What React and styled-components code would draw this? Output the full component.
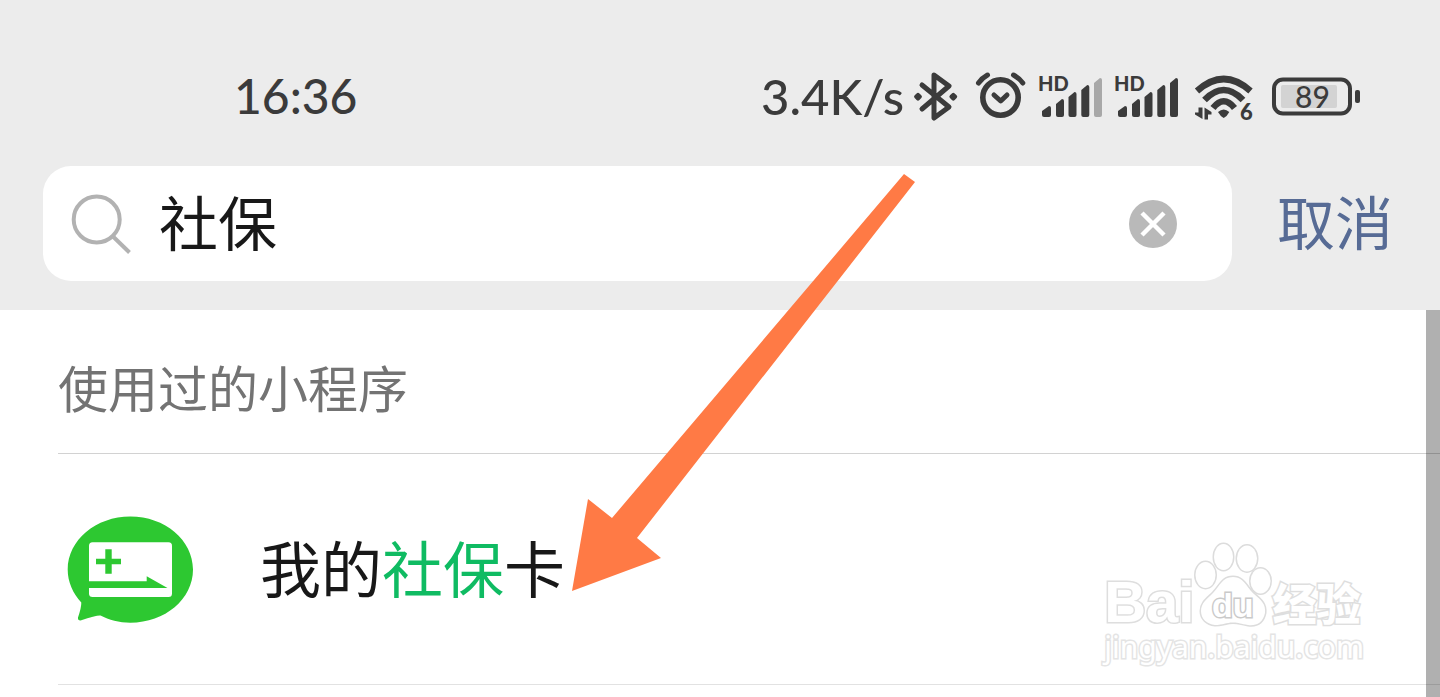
import React, { useState } from 'react';
import styled, { createGlobalStyle } from 'styled-components';

const GlobalStyle = createGlobalStyle`
  * { box-sizing: border-box; }
  body {
    margin: 0;
    background: #fff;
    font-family: "Noto Sans CJK SC", sans-serif;
    color: #181818;
  }
  button, input {
    border: 0;
    padding: 0;
    background: none;
    font-family: inherit;
  }
  button { cursor: pointer; }
`

const Page = styled.div`
  position: relative;
  display: flex;
  flex-direction: column;
  min-height: 100vh;
  overflow: hidden;
`

const Header = styled.header`
  padding-bottom: 29px;
  background: #ececec;
`

const StatusBar = styled.div`
  display: flex;
  align-items: center;
  justify-content: space-between;
  height: 166px;
  padding: 28px 80px 0 234px;
  color: #3b3b3b;
`

const StatusText = styled.span`
  padding-bottom: 2px;
  font-family: Lato, sans-serif;
  font-size: ${props => props.$size}px;
  font-weight: 500;
  line-height: 60px;
`

const StatusGroup = styled.div`
  display: flex;
  align-items: center;
  gap: ${props => props.$gap}px;
`

const Glyph = styled.svg`
  display: block;
  flex: none;
  overflow: visible;
`

const SmallLabel = styled.text`
  font-family: Lato, sans-serif;
  font-size: ${props => props.$size}px;
  font-weight: ${props => props.$weight};
  fill: #3b3b3b;
`

const SearchRow = styled.form`
  display: flex;
  align-items: center;
  padding: 0 47px 0 43px;
  gap: 45px;
`

const SearchBox = styled.label`
  display: flex;
  flex: 1;
  align-items: center;
  min-width: 0;
  height: 115px;
  padding: 0 55px 0 28px;
  border-radius: 28px;
  background: #fff;
`

const SearchInput = styled.input`
  flex: 1;
  min-width: 0;
  height: 96px;
  margin-left: 28px;
  padding-bottom: 6px;
  color: #181818;
  font-size: 59px;
  outline: none;
`

const IconButton = styled.button`
  flex: none;
  height: 48px;
`

const CancelButton = styled.button`
  flex: none;
  padding-bottom: 8px;
  color: #576b95;
  font-size: 58px;
  line-height: 90px;
`

const Results = styled.main`
  position: relative;
  flex: 1;
  background: #fff;
`

const SectionTitle = styled.h2`
  margin: 0 0 0 58px;
  padding: 39px 0 30px;
  border-bottom: 1px solid #d2d2d2;
  color: #737373;
  font-size: 50px;
  font-weight: 400;
  line-height: 74px;
`

const ResultRow = styled.a`
  display: flex;
  align-items: center;
  gap: 66px;
  height: 231px;
  margin-left: 58px;
  padding: 2px 0 0 9px;
  border-bottom: 1px solid #e2e2e2;
  color: #181818;
  font-size: 61px;
  line-height: 90px;
  text-decoration: none;
`

const ResultName = styled.span`
  padding-bottom: 6px;
`

const Match = styled.span`
  color: #0fbb62;
`

const ScrollThumb = styled.div`
  position: absolute;
  top: 0;
  right: 0;
  bottom: 0;
  width: 14px;
  background: rgba(0, 0, 0, 0.31);
`

const Pointer = styled.svg`
  position: absolute;
  top: 174px;
  left: 572px;
  pointer-events: none;
`

const Watermark = styled.div`
  position: absolute;
  right: 76px;
  bottom: 32px;
  display: flex;
  flex-direction: column;
  align-items: flex-start;
  color: #fff;
  paint-order: stroke fill;
  -webkit-text-stroke: 3px #dedede;
  pointer-events: none;
`

const Brand = styled.div`
  display: flex;
  align-items: flex-end;
`

const BrandLatin = styled.span`
  font-family: "Liberation Sans", sans-serif;
  font-size: 58px;
  font-weight: 700;
  line-height: 54px;
`

const BrandHan = styled.span`
  font-size: 44px;
  font-weight: 900;
  line-height: 54px;
`

const SiteUrl = styled.span`
  font-family: "Noto Sans", sans-serif;
  font-size: 30px;
  line-height: 36px;
  -webkit-text-stroke: 3px #e4e4e4;
`

const PawText = styled.text`
  font-family: "Liberation Sans", sans-serif;
  font-size: 34px;
  font-weight: 700;
  fill: #fff;
  stroke: #cacaca;
  stroke-width: 3px;
`

const INK = '#3b3b3b';

function BluetoothIcon() {
  return (
    <Glyph width="50" height="52" viewBox="0 0 50 52" fill="none" stroke={INK} strokeWidth="5" strokeLinecap="round" strokeLinejoin="round">
      <path d="M9 14L36 36L21 47V4L36 15L9 38" />
      <path d="M5 23.8L6.9 25.7L5 27.6L3.1 25.7zM40.3 23.8L42.2 25.7L40.3 27.6L38.4 25.7z" fill={INK} strokeWidth="4" />
    </Glyph>
  )
}

function AlarmIcon() {
  return (
    <Glyph width="52" height="52" viewBox="0 0 52 52" fill="none" stroke={INK} strokeWidth="5" strokeLinecap="round" strokeLinejoin="round">
      <circle cx="25.5" cy="26.5" r="17.7" strokeWidth="5.6" />
      <path d="M19 24L25.7 30L32 24" />
      <path d="M3.5 12Q7 7 12.5 4M38.5 4Q44 7 47.8 12" />
    </Glyph>
  )
}

function SignalIcon({ weak }) {
  const bars = [[3, 35, 9], [17, 28, 8], [29.5, 21, 8], [42.3, 14, 8], [55, 7, 8]];
  return (
    <Glyph width="64" height="52" viewBox="0 0 64 52" fill={INK}>
      <SmallLabel x="-1" y="20" $size={20} $weight={900}>HD</SmallLabel>
      {bars.map(([x, y, w], i) => (
        <path
          key={x}
          d={`M${x} ${y + 5}L${x + w - 2} ${y}Q${x + w} ${y} ${x + w} ${y + 2}V44Q${x + w} 46 ${x + w - 2} 46H${x + 2}Q${x} 46 ${x} 44z`}
          fill={weak && i === 4 ? '#a8a8a8' : INK}
        />
      ))}
    </Glyph>
  )
}

function WifiIcon() {
  return (
    <Glyph width="69" height="52" viewBox="-4 0 69 52" fill="none" stroke={INK} strokeWidth="6.5">
      <path d="M2 20Q28.7 -4 55.5 20" />
      <path d="M9.5 29Q28.7 9 48 29" />
      <path d="M18 37Q28.7 23.5 39.5 37" />
      <path d="M23 41Q28.7 36 34.3 41Q32 45.5 28.7 47Q25.5 45.5 23 41z" fill={INK} stroke="none" />
      <path d="M3.5 36.5H7.5V48L0 43.5V41.5H3.5zM9.5 48.5V36.5L16.5 41V43.500H13V48.5z" fill={INK} stroke="none" />
      <SmallLabel x="45" y="49" $size={22} $weight={900} stroke="none">6</SmallLabel>
    </Glyph>
  )
}

function BatteryIcon() {
  return (
    <Glyph width="88" height="52" viewBox="0 0 88 52">
      <rect x="2" y="8.5" width="76" height="34" rx="9" fill="none" stroke={INK} strokeWidth="4" />
      <rect x="9" y="14" width="56" height="23" rx="2" fill="#d3d3d3" />
      <rect x="83" y="19" width="5" height="13" rx="2" fill={INK} />
      <SmallLabel x="40.5" y="36.5" textAnchor="middle" $size={30} $weight={500}>89</SmallLabel>
    </Glyph>
  )
}

function SearchIcon() {
  return (
    <Glyph width="60" height="60" viewBox="0 0 60 60" fill="none" stroke="#b2b2b2" strokeWidth="4">
      <circle cx="25.7" cy="25.5" r="23" />
      <path d="M42 42.5L58.5 58.5" />
    </Glyph>
  )
}

function ClearIcon() {
  return (
    <Glyph width="48" height="48" viewBox="0 0 48 48">
      <circle cx="24" cy="24" r="24" fill="#b9b9b9" />
      <path d="M13 13L35 35M35 13L13 35" stroke="#fff" strokeWidth="4.5" />
    </Glyph>
  )
}

function CardLogo() {
  return (
    <Glyph width="127" height="108" viewBox="0 0 127 108" fill="#2dc831">
      <path d="M63.3 0.5C98 0.5 126 24 126 53.5S98 106.7 63.3 106.7C52 106.7 42 104 33.5 99.5Q30 99 13.5 104.5Q10.5 104.5 11 101.5Q14.5 91 14.3 86.5C6 77.5 0.7 66 0.7 53.5C0.7 24 29 0.5 63.3 0.5z" />
      <rect x="22" y="26.3" width="83" height="54.7" rx="3.5" fill="#fff" />
      <path d="M38.3 33.3H44.7V42.7H54V48.3H44.7V57.7H38.3V48.3H29V42.7H38.3z" />
      <path d="M21.5 65.3H79.7V60.3L100.5 72H21.5z" />
    </Glyph>
  )
}

function Paw() {
  return (
    <Glyph width="78" height="86" viewBox="0 0 78 86" fill="#fff" stroke="#dcdcdc" strokeWidth="3">
      <ellipse cx="11.5" cy="32" rx="10" ry="13" />
      <ellipse cx="29.5" cy="14" rx="9.500" ry="13" />
      <ellipse cx="53" cy="15.5" rx="10" ry="13" />
      <ellipse cx="66.5" cy="38" rx="10" ry="12.5" />
      <path d="M39 34C50 34 53 45 60 51C67 57 72 61 71 70C69 80 62 83 54 82C47 81 45 79.5 39 79.5C32 79.5 29 82 21 82C13 81 7 76 7 68C7 60 13 56 19 50C26 43 28 34 39 34z" />
      <PawText x="18" y="74">du</PawText>
    </Glyph>
  )
}

export default function App() {
  const [query, setQuery] = useState('社保');

  return (
    <Page>
      <GlobalStyle />
      <Header>
        <StatusBar>
          <StatusText $size={48}>16:36</StatusText>
          <StatusGroup $gap={9}>
            <StatusText $size={49}>3.4K/s</StatusText>
            <StatusGroup $gap={12}>
              <BluetoothIcon />
              <AlarmIcon />
              <SignalIcon weak />
              <SignalIcon />
              <WifiIcon />
              <BatteryIcon />
            </StatusGroup>
          </StatusGroup>
        </StatusBar>
        <SearchRow onSubmit={e => e.preventDefault()}>
          <SearchBox htmlFor="query">
            <SearchIcon />
            <SearchInput id="query" type="text" aria-label="搜索" value={query} onChange={e => setQuery(e.target.value)} />
            <IconButton type="button" aria-label="清除" onClick={() => setQuery('')}>
              <ClearIcon />
            </IconButton>
          </SearchBox>
          <CancelButton type="button">取消</CancelButton>
        </SearchRow>
      </Header>

      <Results>
        <SectionTitle>使用过的小程序</SectionTitle>
        <ResultRow href="#card">
          <CardLogo />
          <ResultName>我的<Match>社保</Match>卡</ResultName>
        </ResultRow>
        <ScrollThumb />
      </Results>

      <Watermark>
        <Brand>
          <BrandLatin>Bai</BrandLatin>
          <Paw />
          <BrandHan>经验</BrandHan>
        </Brand>
        <SiteUrl>jingyan.baidu.com</SiteUrl>
      </Watermark>

      <Pointer width="343" height="418" viewBox="0 0 343 418" aria-hidden="true">
        <path d="M332 0L343 8L65 364L89 384L0 417L16 325L40 344z" fill="#ff7a45" />
      </Pointer>
    </Page>
  )
}
